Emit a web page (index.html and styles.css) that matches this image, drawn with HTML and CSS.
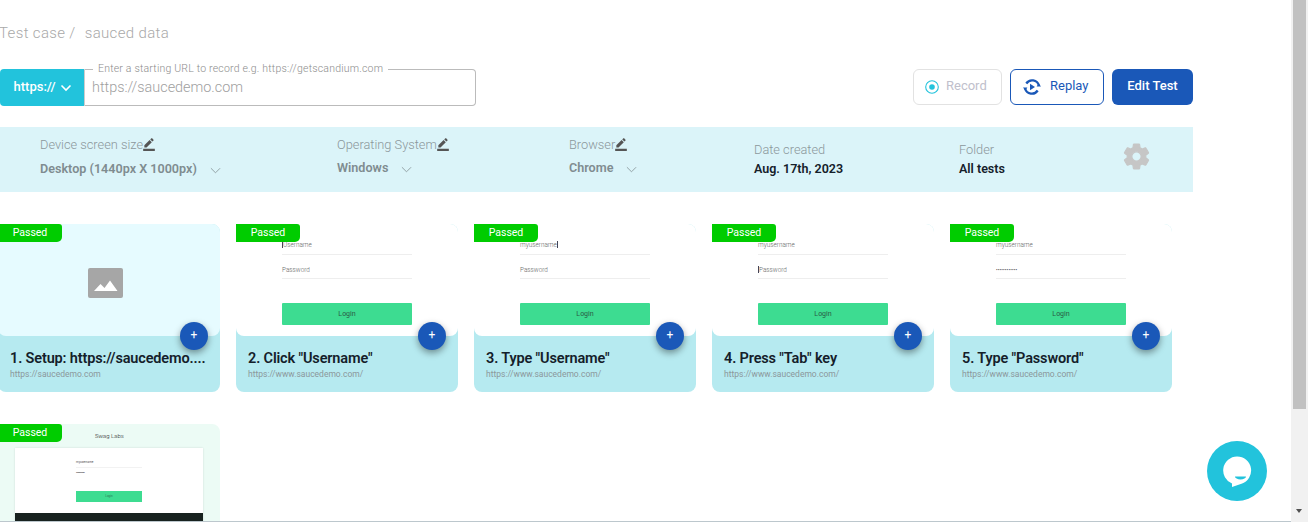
FILE: index.html
```html
<!DOCTYPE html>
<html lang="en">
<head>
<meta charset="utf-8">
<title>sauced data</title>
<link rel="stylesheet" href="styles.css">
</head>
<body>
<div class="window">
  <main class="page">
    <div class="content">
      <p class="crumb">Test case / <span class="crumb-name">sauced data</span></p>
      <section class="toolbar">
        <div class="url">
          <button class="scheme">https://
            <svg class="chev" viewBox="0 0 12 8"><path d="M1.5 1.5 6 6l4.500-4.500" fill="none" stroke="#fff" stroke-width="1.600"/></svg>
          </button>
          <div class="url-field">
            <span class="legend">Enter a starting URL to record e.g. https://getscandium.com</span>
            <span class="url-value">https://saucedemo.com</span>
          </div>
        </div>
        <div class="actions">
          <button class="btn btn-record">
            <svg class="ico-rec" viewBox="0 0 14 14"><circle cx="7" cy="7" r="6.300" fill="none" stroke="#22c3dc" stroke-width="1.100"/><circle cx="7" cy="7" r="2.800" fill="#22c3dc"/></svg>
            Record
          </button>
          <button class="btn btn-replay">
            <svg class="ico-replay" viewBox="0 0 18 18"><path d="M3.300 5.500A7 7 0 0 1 15.900 7.500M14.700 12.500A7 7 0 0 1 2.100 10.500" fill="none" stroke="#1a58b8" stroke-width="2.300"/><path d="M0 9.500h4.400L2.200 12.500zM13.600 8.500h4.400l-2.200-3z" fill="#1a58b8"/><path d="M7 5.800 12 9l-5 3.200z" fill="#1a58b8"/></svg>
            Replay
          </button>
          <button class="btn btn-edit">Edit Test</button>
        </div>
      </section>

      <section class="info">
        <div class="info-col">
          <div class="info-label">Device screen size<svg class="pen" viewBox="0 0 24 24"><path d="M22 24H2v-4h20v4zM13.060 5.190l3.750 3.750L7.750 18H4v-3.750l9.060-9.060zm4.820 2.680-3.750-3.750 1.830-1.830c.39-.39 1.020-.39 1.410 0l2.340 2.340c.39.39.39 1.020 0 1.410l-1.830 1.830z"/></svg></div>
          <div class="info-select"><span>Desktop (1440px X 1000px)</span><svg class="sel-chev" viewBox="0 0 12 7"><path d="M1 1l5 5 5-5" fill="none" stroke="#8d9ba0"/></svg></div>
        </div>
        <div class="info-col">
          <div class="info-label">Operating System<svg class="pen" viewBox="0 0 24 24"><path d="M22 24H2v-4h20v4zM13.060 5.190l3.750 3.750L7.750 18H4v-3.750l9.060-9.060zm4.820 2.680-3.750-3.750 1.830-1.830c.39-.39 1.020-.39 1.410 0l2.340 2.340c.39.39.39 1.020 0 1.410l-1.830 1.830z"/></svg></div>
          <div class="info-select info-select-up"><span>Windows</span><svg class="sel-chev" viewBox="0 0 12 7"><path d="M1 1l5 5 5-5" fill="none" stroke="#8d9ba0"/></svg></div>
        </div>
        <div class="info-col">
          <div class="info-label">Browser<svg class="pen" viewBox="0 0 24 24"><path d="M22 24H2v-4h20v4zM13.060 5.190l3.750 3.750L7.750 18H4v-3.750l9.060-9.060zm4.820 2.680-3.750-3.750 1.830-1.830c.39-.39 1.020-.39 1.410 0l2.340 2.340c.39.39.39 1.020 0 1.410l-1.830 1.830z"/></svg></div>
          <div class="info-select info-select-up"><span>Chrome</span><svg class="sel-chev" viewBox="0 0 12 7"><path d="M1 1l5 5 5-5" fill="none" stroke="#8d9ba0"/></svg></div>
        </div>
        <div class="info-col info-static">
          <div class="info-label">Date created</div>
          <div class="info-value">Aug. 17th, 2023</div>
        </div>
        <div class="info-col info-static">
          <div class="info-label">Folder</div>
          <div class="info-value">All tests</div>
        </div>
        <svg class="gear" viewBox="0 0 24 24"><path d="M19.140 12.940c.04-.3.060-.61.060-.94 0-.32-.02-.64-.07-.94l2.030-1.580c.18-.14.23-.41.120-.61l-1.920-3.320c-.12-.22-.37-.29-.59-.22l-2.390.96c-.5-.38-1.030-.7-1.620-.94l-.36-2.540c-.04-.24-.24-.41-.48-.41h-3.840c-.24 0-.43.17-.47.41l-.36 2.540c-.59.24-1.130.57-1.620.94l-2.390-.96c-.22-.08-.47 0-.59.220L2.740 8.870c-.12.21-.08.47.12.610l2.030 1.580c-.05.3-.09.63-.09.94s.02.64.07.94l-2.030 1.580c-.18.14-.23.41-.12.61l1.920 3.320c.12.22.37.29.59.22l2.390-.96c.5.38 1.030.7 1.620.94l.36 2.540c.05.24.24.41.48.41h3.840c.24 0 .44-.17.47-.41l.36-2.540c.59-.24 1.130-.56 1.620-.94l2.390.96c.22.08.47 0 .59-.22l1.920-3.320c.12-.22.07-.47-.12-.61l-2.010-1.580zM12 15.600c-1.980 0-3.600-1.620-3.600-3.600s1.620-3.600 3.600-3.600 3.600 1.620 3.600 3.600-1.620 3.600-3.600 3.600z"/></svg>
      </section>

      <section class="cards">
        <article class="card">
          <div class="shot shot-empty">
            <svg class="placeholder" viewBox="0 0 35 30"><rect width="35" height="30" rx="2" fill="#a6a6a6"/><path d="M6 23l6.500-7 4 4 5.500-7.500L29.500 23z" fill="#fff"/></svg>
          </div>
          <span class="badge">Passed</span>
          <span class="add">+</span>
          <div class="meta"><h3>1. Setup: https://saucedemo....</h3><p>https://saucedemo.com</p></div>
        </article>

        <article class="card">
          <div class="shot">
            <div class="mock">
              <div class="mock-field"><i class="caret"></i>Username</div>
              <div class="mock-field">Password</div>
              <div class="mock-login">Login</div>
            </div>
          </div>
          <span class="badge">Passed</span>
          <span class="add">+</span>
          <div class="meta"><h3>2. Click "Username"</h3><p>https://www.saucedemo.com/</p></div>
        </article>

        <article class="card">
          <div class="shot">
            <div class="mock">
              <div class="mock-field">myusername<i class="caret"></i></div>
              <div class="mock-field">Password</div>
              <div class="mock-login">Login</div>
            </div>
          </div>
          <span class="badge">Passed</span>
          <span class="add">+</span>
          <div class="meta"><h3>3. Type "Username"</h3><p>https://www.saucedemo.com/</p></div>
        </article>

        <article class="card">
          <div class="shot">
            <div class="mock">
              <div class="mock-field">myusername</div>
              <div class="mock-field"><i class="caret"></i>Password</div>
              <div class="mock-login">Login</div>
            </div>
          </div>
          <span class="badge">Passed</span>
          <span class="add">+</span>
          <div class="meta"><h3>4. Press "Tab" key</h3><p>https://www.saucedemo.com/</p></div>
        </article>

        <article class="card">
          <div class="shot">
            <div class="mock">
              <div class="mock-field">myusername</div>
              <div class="mock-field mock-dots">••••••••••••</div>
              <div class="mock-login">Login</div>
            </div>
          </div>
          <span class="badge">Passed</span>
          <span class="add">+</span>
          <div class="meta"><h3>5. Type "Password"</h3><p>https://www.saucedemo.com/</p></div>
        </article>

        <article class="card card-tall">
          <div class="mini">
            <div class="mini-title">Swag Labs</div>
            <div class="mini-panel">
              <div class="mini-form">
                <div class="mini-field">myusername</div>
                <div class="mini-dots">••••••••••••</div>
                <div class="mini-login">Login</div>
              </div>
              <div class="mini-footer"></div>
            </div>
          </div>
          <span class="badge">Passed</span>
        </article>
      </section>
    </div>
    <button class="chat" aria-label="Chat">
      <svg viewBox="0 0 30 32"><path d="M15 .5a14 14 0 0 1 4.500 27.300L10 31v-3.500A14 14 0 0 1 15 .5z" fill="#fff"/><path d="M13 20.500h11a5.500 3 0 0 1-11 0z" fill="#22c3dc"/></svg>
    </button>
  </main>
  <aside class="scrollbar">
    <div class="thumb"></div>
    <div class="arrow"></div>
  </aside>
</div>
</body>
</html>
```

FILE: styles.css
```css
* { box-sizing: border-box; }
html, body { margin: 0; height: 100%; overflow: hidden; background: #fff; }
body { font-family: Roboto, "Liberation Sans", sans-serif; color: #14202a; }
button { font-family: inherit; cursor: pointer; }

.window { display: flex; height: 522px; }
.page { position: relative; flex: 1; min-width: 0; height: 522px; overflow: hidden; border-bottom: 1px solid #bcc7cd; }
.content { width: 1193px; }

.crumb { margin: 0 0 0 -1px; padding-top: 24px; height: 69px; font-size: 15px; line-height: 18px; font-weight: 300; letter-spacing: .35px; color: #a9a9a9; }
.crumb-name { margin-left: 5px; }

.toolbar { display: flex; justify-content: space-between; height: 58px; }
.url { display: flex; width: 476px; height: 37px; }
.scheme { display: flex; align-items: center; justify-content: center; gap: 5px; width: 84px; border: 0; border-radius: 4px 0 0 4px; background: #22c3dc; color: #fff; font-size: 13px; font-weight: 500; padding: 0 0 3px 2px; }
.chev { width: 12px; height: 8px; margin-top: 4px; }
.url-field { position: relative; flex: 1; border: 1px solid #bbb; border-left-color: #ccc; border-radius: 0 4px 4px 0; padding: 8px 7px 0; font-size: 14.400px; line-height: 19px; font-weight: 300; color: #a0a0a0; }
.legend { position: absolute; left: 8px; top: -7px; padding: 0 5px; background: #fff; font-size: 10.500px; line-height: 12px; letter-spacing: .2px; color: #8c8c8c; white-space: nowrap; }

.actions { display: flex; gap: 8px; height: 36px; }
.btn { display: flex; align-items: center; height: 36px; border-radius: 6px; font-size: 13px; background: #fff; padding: 0; }
.btn-record { width: 89px; border: 1px solid #e2e2e2; color: #c0c0cc; padding: 0 0 3px 11px; gap: 7px; }
.ico-rec { width: 14px; height: 14px; margin-top: 3px; }
.btn-replay { width: 94px; border: 1px solid #1a58b8; color: #1a58b8; padding: 0 0 3px 12px; gap: 9px; }
.ico-replay { width: 18px; height: 18px; margin-top: 3px; }
.btn-edit { width: 81px; border: 0; background: #1a58b8; color: #fff; font-weight: 500; justify-content: center; padding-bottom: 4px; }

.info { display: grid; grid-template-columns: 297px 232px 185px 205px 163px 28px; height: 65px; padding-left: 40px; background: #dbf4f9; align-items: start; }
.info-col { padding-top: 8px; }
.info-static { padding-top: 13px; }
.info-label { display: flex; align-items: center; height: 18px; font-size: 12.800px; font-weight: 300; color: #8b979b; white-space: nowrap; }
.pen { width: 14px; height: 14px; margin-left: -1px; fill: #555; }
.info-select { display: flex; align-items: center; margin-top: 6px; height: 18px; font-size: 12.600px; font-weight: 600; color: #7f8c90; white-space: nowrap; }
.info-select-up { margin-top: 5px; }
.sel-chev { width: 11px; height: 7px; margin-left: 13px; margin-top: 4px; }
.info-value { margin-top: 2px; height: 18px; line-height: 18px; font-size: 12.500px; font-weight: 600; color: #14202a; white-space: nowrap; }
.gear { width: 31px; height: 31px; margin: 14px 0 0 -1px; fill: #c6c6c6; stroke: #c6c6c6; stroke-width: .9; stroke-linejoin: round; }

.cards { display: grid; grid-template-columns: repeat(5, 222px); gap: 32px 16px; margin: 32px 0 0 -2px; }
.card { position: relative; height: 168px; border-radius: 8px; background: #b6eaf0; }
.shot { height: 112px; border-radius: 8px; background: #fff; overflow: hidden; }
.shot-empty { display: flex; align-items: center; justify-content: center; padding: 6px 7px 0 0; background: #e6fbff; }
.placeholder { width: 35px; height: 30px; }

.badge { position: absolute; left: 0; top: 0; width: 64px; height: 18px; border-radius: 0 3px 5px 0; background: #00cc00; color: #fff; font-size: 10.500px; line-height: 18px; text-align: center; }
.add { position: absolute; right: 12px; top: 98px; width: 28px; height: 28px; border-radius: 50%; background: #1a58b8; color: #fff; font-size: 12px; line-height: 27px; text-align: center; box-shadow: 0 3px 7px rgba(0, 0, 0, .4); }
.meta { padding: 13px 0 0 12px; }
.meta h3 { margin: 0; font-size: 14.500px; line-height: 20px; font-weight: 600; letter-spacing: -.15px; color: #14202a; white-space: nowrap; }
.meta p { margin: 0; font-size: 8.500px; line-height: 11px; color: #8b979b; }

.mock { width: 130px; margin-left: 46px; padding-top: 7px; }
.mock-field { height: 24px; padding-top: 10px; border-bottom: 1px solid #eee; font-size: 6.400px; line-height: 9px; font-weight: 300; color: #666; white-space: nowrap; }
.mock-field + .mock-field { padding-top: 11px; }
.mock-field.mock-dots { letter-spacing: .15px; color: #333; font-size: 5px; }
.caret { display: inline-block; width: 1px; height: 7px; vertical-align: -1px; background: #445; }
.mock-login { height: 22px; margin-top: 24px; border-radius: 1px; background: #3ddc91; font-size: 7px; line-height: 22px; color: #2a5a45; text-align: center; }

.card-tall { background: #ecfbf5; }
.mini { height: 168px; padding: 0 17px; }
.mini-title { padding: 8px 0 0 80px; height: 24px; font-size: 6px; line-height: 8px; font-weight: 300; color: #222; white-space: nowrap; }
.mini-panel { height: 144px; background: #fff; box-shadow: 0 0 2px rgba(0, 0, 0, .12); }
.mini-form { height: 65px; padding: 10px 0 0 61px; }
.mini-field { width: 66px; height: 10px; border-bottom: 1px solid #f2f2f2; font-size: 3px; line-height: 8px; color: #555; }
.mini-dots { height: 14px; padding-top: 3px; font-size: 3px; line-height: 5px; color: #222; letter-spacing: -.3px; }
.mini-login { width: 66px; height: 11px; margin-top: 9px; background: #3ddc91; font-size: 3px; line-height: 11px; color: #2a7a55; text-align: center; }
.mini-footer { height: 79px; background: #18221f; }

.chat { position: absolute; left: 1207px; top: 441px; display: flex; align-items: center; justify-content: center; width: 60px; height: 60px; border: 0; border-radius: 50%; background: #22c3dc; padding: 0; }
.chat svg { width: 30px; height: 32px; margin-top: 2px; }

.scrollbar { position: relative; width: 17px; background: #f1f1f1; }
.thumb { width: 13px; height: 409px; margin-left: 2px; background: #c1c1c1; }
.arrow { position: absolute; left: 5px; top: 509px; width: 0; height: 0; border: 3.500px solid transparent; border-top: 4px solid #505050; border-bottom: 0; }
```
